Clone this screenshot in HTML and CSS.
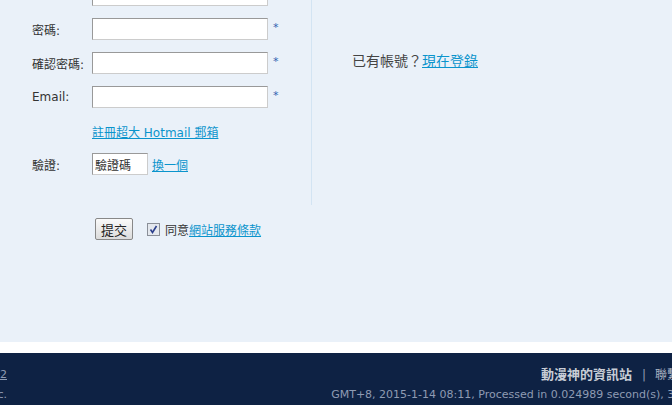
FILE: index.html
```html
<!DOCTYPE html>
<html lang="zh-Hant">
<head>
    <meta charset="UTF-8">
    <meta name="viewport" content="width=device-width, initial-scale=1.0">
    <title>註冊</title>
    <link rel="stylesheet" href="styles.css">
</head>
<body>

    <div class="main">
        <div class="reg">
            <div class="reg-left">
                <div class="row">
                    <span class="label"></span>
                    <input type="text" class="field">
                </div>
                <div class="row">
                    <label class="label">密碼:</label>
                    <input type="password" class="field">
                    <span class="star">*</span>
                </div>
                <div class="row">
                    <label class="label">確認密碼:</label>
                    <input type="password" class="field">
                    <span class="star">*</span>
                </div>
                <div class="row">
                    <label class="label">Email:</label>
                    <input type="text" class="field">
                    <span class="star">*</span>
                </div>
                <div class="row row-link">
                    <span class="label"></span>
                    <a href="#" class="link">註冊超大 Hotmail 郵箱</a>
                </div>
                <div class="row">
                    <label class="label">驗證:</label>
                    <input type="text" class="field field-code" value="驗證碼">
                    <a href="#" class="link">換一個</a>
                </div>
            </div>
            <div class="reg-right">
                已有帳號？<a href="#" class="link">現在登錄</a>
            </div>
        </div>

        <div class="submit-row">
            <button class="btn">提交</button>
            <span class="check">
                <svg width="13" height="13" viewBox="0 0 13 13">
                    <rect x="0.5" y="0.5" width="12" height="12" fill="#e4e8ee" stroke="#8a8f98"/>
                    <path d="M3.5 6.5 L5.5 9.5 L9.5 3" fill="none" stroke="#2b3f8c" stroke-width="1.6"/>
                </svg>
            </span>
            <span class="agree">同意<a href="#" class="link">網站服務條款</a></span>
        </div>
    </div>

    <div class="gap"></div>

    <div class="footer">
        <div class="ft-inner">
            <div class="ft-left">
                <p>Powered by <b>Discuz!</b> <a href="#">X2</a></p>
                <p>&copy; 2001-2011 Comsenz Inc.</p>
            </div>
            <div class="ft-right">
                <p class="ft-links"><b>動漫神的資訊站</b><span class="pipe">|</span>聯繫我們<span class="pipe">|</span>Archiver</p>
                <p class="ft-info">GMT+8, 2015-1-14 08:11, Processed in 0.024989 second(s), 3 queries , Gzip On.</p>
            </div>
        </div>
    </div>

</body>
</html>
```

FILE: styles.css
```css
body {
    margin: 0;
    overflow: hidden;
    font-family: "DejaVu Sans", "Noto Sans CJK TC", sans-serif;
    font-size: 12px;
    color: #333;
    background: #fff;
}

.main {
    background: #EAF1F9;
    height: 342px;
    overflow: hidden;
}

.reg {
    display: flex;
    margin-top: -28px;
}

.reg-left {
    width: 312px;
    height: 233px;
    padding-top: 12px;
    box-sizing: border-box;
    border-right: 1px solid #D3E4F3;
}

.row {
    display: flex;
    align-items: center;
    height: 22px;
    margin-bottom: 12px;
}

.row-link {
    margin-bottom: 11px;
}

.label {
    width: 60px;
    padding-left: 32px;
    flex-shrink: 0;
}

.field {
    width: 176px;
    height: 22px;
    box-sizing: border-box;
    border: 1px solid;
    border-color: #999 #ccc #ccc #999;
    background: #fff;
    padding: 0 2px;
    font-family: inherit;
    font-size: 12px;
    color: #333;
    margin: 0;
}

.field-code {
    width: 56px;
    margin-right: 4px;
}

.star {
    margin-left: 5px;
    color: #2f63b0;
    align-self: flex-start;
    line-height: 20px;
    font-size: 11px;
}

.link {
    color: #0A94CC;
    text-decoration: underline;
}

.reg-right {
    padding-left: 40px;
    padding-top: 79px;
    font-size: 14px;
    line-height: 20px;
    color: #444;
}

.submit-row {
    display: flex;
    align-items: center;
    padding-left: 95px;
    margin-top: 13px;
}

.btn {
    width: 38px;
    height: 22px;
    padding: 0;
    border: 1px solid #888;
    border-radius: 2px;
    background: linear-gradient(#fafafa, #dcdcdc);
    font-family: inherit;
    font-size: 13px;
    color: #222;
}

.check {
    display: flex;
    margin-left: 14px;
}

.agree {
    margin-left: 5px;
    font-size: 12px;
}

.gap {
    height: 11px;
}

.footer {
    background: #0E2244;
    height: 52px;
    overflow: hidden;
    font-size: 11px;
}

.ft-inner {
    width: 1000px;
    margin-left: -193px;
    display: flex;
    justify-content: space-between;
    padding-top: 12px;
}

.ft-inner p {
    margin: 0;
    line-height: 20px;
}

.ft-left {
    width: 200px;
    text-align: right;
    color: #8E9BB3;
}

.ft-left a {
    color: #8E9BB3;
}

.ft-right {
    text-align: right;
    color: #8E9BB3;
    margin-right: 31px;
}

.ft-links {
    font-size: 12px;
    color: #A9B1C0;
}

.ft-links b {
    font-size: 13px;
    color: #C8CDD6;
}

.pipe {
    margin: 0 9px 0 10px;
    color: #8E9BB3;
}
```
